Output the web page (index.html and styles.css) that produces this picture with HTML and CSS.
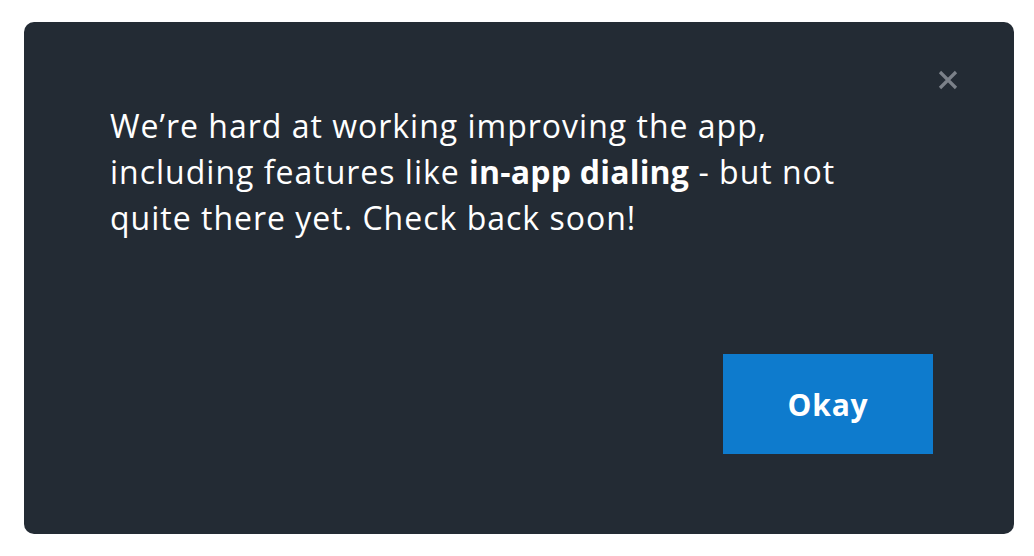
FILE: index.html
```html
<!DOCTYPE html>
<html>
<head>
<meta charset="utf-8">
<link rel="stylesheet" href="styles.css">
</head>
<body>
<div class="page">
  <div class="modal">
    <button class="close" aria-label="Close">
      <svg width="20" height="20" viewBox="0 0 20 20"><path d="M2 2 L18 18 M18 2 L2 18" stroke="#7b8189" stroke-width="3.2" stroke-linecap="butt"/></svg>
    </button>
    <p class="message">We’re hard at working improving the app, including features like <strong>in-app dialing</strong> - but not quite there yet. Check back soon!</p>
    <div class="actions">
      <button class="okay">Okay</button>
    </div>
  </div>
</div>
</body>
</html>
```
FILE: styles.css
```css
html, body {
  margin: 0;
  padding: 0;
  background: #ffffff;
}
body {
  font-family: "Open Sans", "Liberation Sans", sans-serif;
}
.page {
  width: 1034px;
  height: 556px;
  padding: 22px 20px 22px 24px;
  box-sizing: border-box;
}
.modal {
  position: relative;
  width: 990px;
  height: 512px;
  background: #232b34;
  border-radius: 10px;
  box-sizing: border-box;
  padding: 81px 81px 80px 86px;
  display: flex;
  flex-direction: column;
}
.close {
  position: absolute;
  top: 48px;
  right: 56px;
  width: 20px;
  height: 20px;
  padding: 0;
  border: 0;
  background: none;
  display: flex;
}
.message {
  margin: 0;
  width: 770px;
  color: #ffffff;
  font-size: 32px;
  line-height: 46px;
  letter-spacing: 1px;
}
.message strong {
  font-weight: 700;
  letter-spacing: 0.2px;
}
.actions {
  margin-top: auto;
  display: flex;
  justify-content: flex-end;
}
.okay {
  width: 210px;
  height: 100px;
  border: 0;
  background: #0e7bcd;
  color: #ffffff;
  font-family: "Open Sans", "Liberation Sans", sans-serif;
  font-weight: 700;
  font-size: 30px;
  letter-spacing: 0.8px;
}
```
